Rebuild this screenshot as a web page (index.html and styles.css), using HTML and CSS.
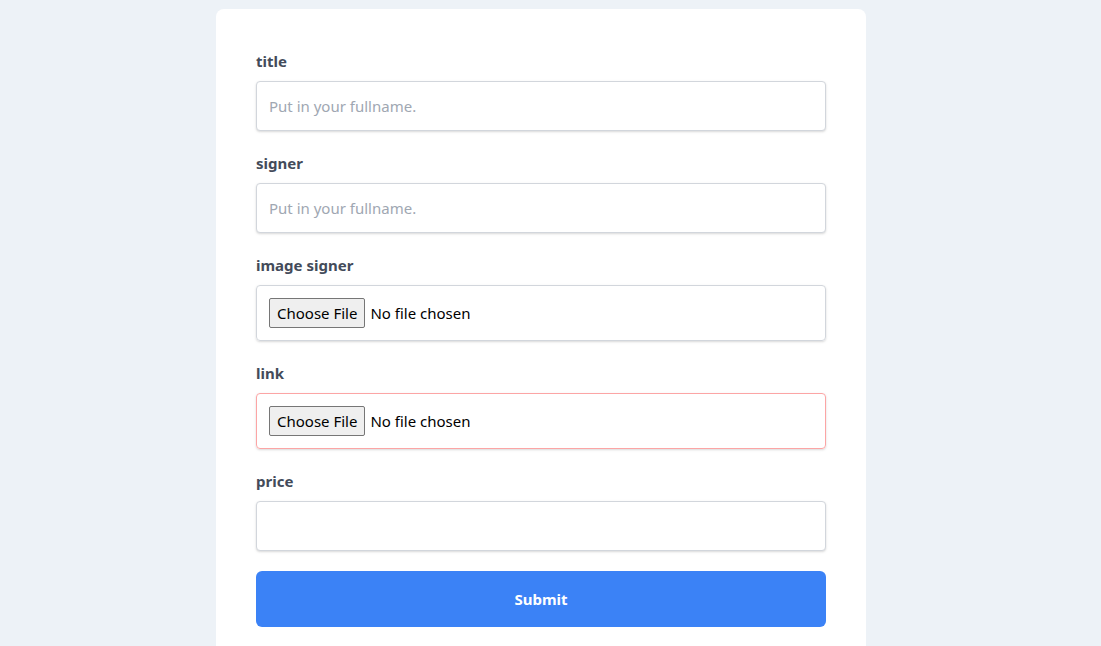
FILE: index.html
```html
<!DOCTYPE html>
<html lang="en">
<head>
<meta charset="utf-8">
<title>Form</title>
<link rel="stylesheet" href="styles.css">
</head>
<body>
<main class="page">
  <form class="card">
    <div class="field">
      <label class="label" for="title">title</label>
      <input class="input" id="title" type="text" placeholder="Put in your fullname.">
    </div>
    <div class="field">
      <label class="label" for="signer">signer</label>
      <input class="input" id="signer" type="text" placeholder="Put in your fullname.">
    </div>
    <div class="field">
      <label class="label" for="image">image signer</label>
      <div class="file-box">
        <span class="file-btn">Choose File</span>
        <span class="file-text">No file chosen</span>
      </div>
    </div>
    <div class="field">
      <label class="label" for="link">link</label>
      <div class="file-box file-box--error">
        <span class="file-btn">Choose File</span>
        <span class="file-text">No file chosen</span>
      </div>
    </div>
    <div class="field">
      <label class="label" for="price">price</label>
      <input class="input" id="price" type="text">
    </div>
    <button class="submit" type="button">Submit</button>
  </form>
</main>
</body>
</html>
```

FILE: styles.css
```css
* { box-sizing: border-box; }
html, body { margin: 0; padding: 0; }
body {
  background: #edf2f7;
  font-family: "Noto Sans", "Open Sans", sans-serif;
  font-size: 16px;
  color: #4a5568;
}
.page {
  display: flex;
  justify-content: center;
  padding-top: 9px;
  padding-right: 19px;
}
.card {
  width: 650px;
  background: #fff;
  border-radius: 8px;
  padding: 40px 40px 40px;
  display: flex;
  flex-direction: column;
  gap: 20px;
}
.field {
  display: flex;
  flex-direction: column;
  gap: 8px;
}
.label {
  font-weight: 700;
  font-size: 15px;
  line-height: 24px;
  color: #434b5a;
}
.input {
  height: 50px;
  width: 100%;
  border: 1px solid #d2d6dc;
  border-radius: 4px;
  box-shadow: 0 1px 3px rgba(0,0,0,0.1), 0 1px 2px rgba(0,0,0,0.06);
  padding: 12px 12px;
  font: inherit;
  font-size: 15px;
  color: #4a5568;
  outline: none;
}
.input::placeholder { color: #a0a7b2; }
.file-box {
  height: 56px;
  border: 1px solid #d2d6dc;
  border-radius: 4px;
  box-shadow: 0 1px 3px rgba(0,0,0,0.1), 0 1px 2px rgba(0,0,0,0.06);
  padding: 0 12px;
  display: flex;
  align-items: center;
  gap: 5px;
  font-size: 15px;
  color: #000;
}
.file-box--error { border-color: #fca5a5; }
.file-btn {
  height: 30px;
  display: flex;
  align-items: center;
  padding: 0 7px;
  background: #efefef;
  border: 1px solid #767676;
  border-radius: 2px;
  color: #000;
}
.submit {
  height: 56px;
  border: 0;
  border-radius: 6px;
  background: #3b82f6;
  color: #fff;
  font: inherit;
  font-weight: 700;
  font-size: 15px;
}
```
